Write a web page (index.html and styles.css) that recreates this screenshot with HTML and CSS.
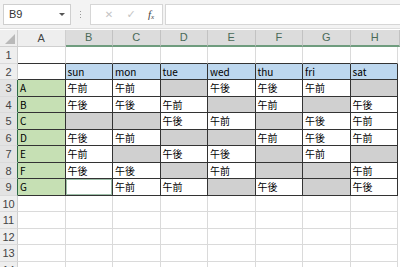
FILE: index.html
```html
<!DOCTYPE html>
<html lang="ja">
<head>
<meta charset="utf-8">
<link rel="stylesheet" href="styles.css">
</head>
<body>
<div class="app">
  <div class="fbar">
    <div class="namebox"><span class="ref">B9</span><span class="dd"></span></div>
    <div class="sep"><i></i><i></i><i></i></div>
    <div class="fnbtns">
      <span class="btn x">✕</span>
      <span class="btn ok">✓</span>
      <span class="btn fx">f<sub>x</sub></span>
    </div>
    <div class="formula"></div>
  </div>
  <div class="sheet">
    <div class="corner"><span class="tri"></span></div>
    <div class="ch">A</div><div class="ch sel">B</div><div class="ch sel">C</div><div class="ch sel">D</div><div class="ch sel">E</div><div class="ch sel">F</div><div class="ch sel">G</div><div class="ch sel">H</div>

    <div class="rh">1</div>
    <div class="c top"></div><div class="c top"></div><div class="c top"></div><div class="c top"></div><div class="c top"></div><div class="c top"></div><div class="c top"></div><div class="c top"></div>

    <div class="rh">2</div>
    <div class="c t"></div><div class="c t day">sun</div><div class="c t day">mon</div><div class="c t day">tue</div><div class="c t day">wed</div><div class="c t day">thu</div><div class="c t day">fri</div><div class="c t day">sat</div>

    <div class="rh hl">3</div>
    <div class="c t name">A</div><div class="c t">午前</div><div class="c t">午前</div><div class="c t off"></div><div class="c t">午後</div><div class="c t">午後</div><div class="c t">午前</div><div class="c t off"></div>

    <div class="rh hl">4</div>
    <div class="c t name">B</div><div class="c t">午後</div><div class="c t">午後</div><div class="c t">午前</div><div class="c t off"></div><div class="c t">午前</div><div class="c t off"></div><div class="c t">午後</div>

    <div class="rh hl">5</div>
    <div class="c t name">C</div><div class="c t off"></div><div class="c t off"></div><div class="c t">午後</div><div class="c t">午前</div><div class="c t off"></div><div class="c t">午後</div><div class="c t">午前</div>

    <div class="rh hl">6</div>
    <div class="c t name">D</div><div class="c t">午後</div><div class="c t">午前</div><div class="c t off"></div><div class="c t off"></div><div class="c t">午前</div><div class="c t">午後</div><div class="c t">午前</div>

    <div class="rh hl">7</div>
    <div class="c t name">E</div><div class="c t">午前</div><div class="c t off"></div><div class="c t">午後</div><div class="c t">午後</div><div class="c t off"></div><div class="c t">午前</div><div class="c t off"></div>

    <div class="rh hl">8</div>
    <div class="c t name">F</div><div class="c t">午後</div><div class="c t">午後</div><div class="c t off"></div><div class="c t">午前</div><div class="c t off"></div><div class="c t off"></div><div class="c t">午前</div>

    <div class="rh hl">9</div>
    <div class="c t name">G</div><div class="c t active"></div><div class="c t">午前</div><div class="c t">午前</div><div class="c t off"></div><div class="c t">午後</div><div class="c t off"></div><div class="c t">午後</div>

    <div class="rh">10</div>
    <div class="c"></div><div class="c"></div><div class="c"></div><div class="c"></div><div class="c"></div><div class="c"></div><div class="c"></div><div class="c"></div>

    <div class="rh">11</div>
    <div class="c"></div><div class="c"></div><div class="c"></div><div class="c"></div><div class="c"></div><div class="c"></div><div class="c"></div><div class="c"></div>

    <div class="rh">12</div>
    <div class="c"></div><div class="c"></div><div class="c"></div><div class="c"></div><div class="c"></div><div class="c"></div><div class="c"></div><div class="c"></div>

    <div class="rh">13</div>
    <div class="c"></div><div class="c"></div><div class="c"></div><div class="c"></div><div class="c"></div><div class="c"></div><div class="c"></div><div class="c"></div>

    <div class="rh">14</div>
    <div class="c"></div><div class="c"></div><div class="c"></div><div class="c"></div><div class="c"></div><div class="c"></div><div class="c"></div><div class="c"></div>
  </div>
</div>
</body>
</html>
```

FILE: styles.css
```css
* { box-sizing: border-box; }
html, body { margin: 0; padding: 0; background: #fff; }
body {
  width: 400px;
  height: 267px;
  overflow: hidden;
  font-family: "Noto Sans CJK JP", "Noto Sans", sans-serif;
  font-size: 10px;
  color: #000;
}
.app { display: flex; flex-direction: column; height: 267px; }

.fbar {
  height: 29px;
  background: #f3f3f3;
  border-bottom: 1px solid #dedede;
  display: flex;
  align-items: center;
  padding: 0 0 0 3px;
  flex: none;
}
.namebox {
  width: 68px;
  height: 21px;
  background: #fff;
  border: 1px solid #cfcfcf;
  display: flex;
  align-items: center;
  justify-content: space-between;
  padding: 0 5px 0 5px;
  font-family: "Liberation Sans", sans-serif;
  font-size: 11px;
  color: #333;
}
.dd {
  width: 0; height: 0;
  border-left: 3px solid transparent;
  border-right: 3px solid transparent;
  border-top: 3px solid #555;
}
.sep {
  width: 19px;
  display: flex;
  flex-direction: column;
  align-items: center;
  gap: 2px;
}
.sep i { width: 1px; height: 1px; background: #9a9a9a; display: block; }
.fnbtns {
  width: 73px;
  height: 21px;
  background: #fff;
  border: 1px solid #d6d6d6;
  display: flex;
  align-items: center;
  padding: 0 0 0 8px;
  gap: 0;
}
.btn { display: block; text-align: center; color: #c4c4c4; font-family: "DejaVu Sans", sans-serif; }
.btn.x { width: 20px; font-size: 10px; }
.btn.ok { width: 24px; font-size: 11px; }
.btn.fx { width: 16px; font-family: "Liberation Serif", serif; font-style: italic; font-size: 11px; color: #444; }
.btn.fx sub { font-size: 7px; vertical-align: -1px; }
.formula {
  flex: 1;
  height: 21px;
  margin-left: 2px;
  background: #fff;
  border: 1px solid #d6d6d6;
  border-right: none;
}

.sheet {
  margin-top: 1px;
  display: grid;
  grid-template-columns: 18px repeat(8, 47.5px) 1fr;
  grid-template-rows: 17px repeat(14, 16.5px);
  flex: none;
}
.sheet > .rh + .c, .sheet > div { min-width: 0; }
.sheet > .c:nth-of-type(n) {}
.corner {
  background: #eeeeee;
  border-right: 1px solid #cfcfcf;
  border-bottom: 1px solid #cfcfcf;
  position: relative;
}
.tri {
  position: absolute;
  right: 2px; bottom: 2px;
  width: 0; height: 0;
  border-left: 10px solid transparent;
  border-bottom: 10px solid #b9b9b9;
}
.ch {
  background: #eeeeee;
  border-right: 1px solid #cfcfcf;
  border-bottom: 1px solid #cfcfcf;
  text-align: center;
  font-family: "Liberation Sans", sans-serif;
  font-size: 11px;
  line-height: 16px;
  color: #444;
  grid-column: span 1;
}
.ch.sel {
  background: #dcdcdc;
  border-right-color: #c2c2c2;
  border-bottom: 2px solid #6f9c7e;
  color: #4a6a58;
  line-height: 15px;
}
.ch:nth-child(9) { grid-column: span 2; }
.rh {
  grid-column: 1;
  background: #eeeeee;
  border-right: 1px solid #cfcfcf;
  border-bottom: 1px solid #dadada;
  text-align: center;
  font-family: "Liberation Sans", sans-serif;
  font-size: 11px;
  line-height: 16px;
  color: #444;
}
.rh.hl { background: #e3e3e3; border-right: 1px solid #2f6b45; }
.c {
  border-right: 1px solid #dadada;
  border-bottom: 1px solid #dadada;
  padding: 0 2px;
  line-height: 16px;
  white-space: nowrap;
  overflow: hidden;
}
.c:nth-child(9n+1) { grid-column: 9 / span 2; }
.c.top { border-bottom-color: #333; }
.c.t { border-right-color: #333; border-bottom-color: #333; }
.c.day { background: #bdd7ee; }
.c.name { background: #c6e0b4; }
.c.off { background: #d0d0d0; }
.c.active { box-shadow: inset 0 0 0 1px #9dbfa8; }
```
